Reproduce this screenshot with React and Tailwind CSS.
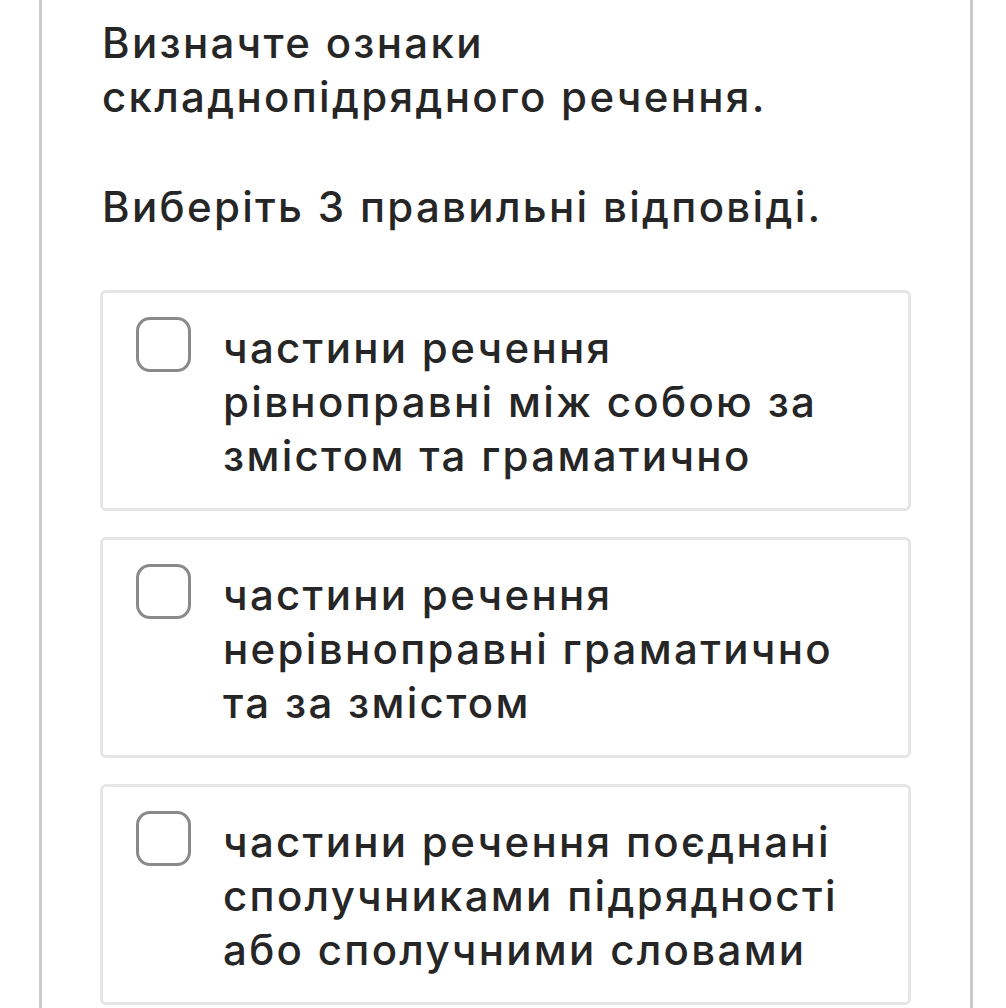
const options = [
  ["частини речення", "рівноправні між собою за", "змістом та граматично"],
  ["частини речення", "нерівноправні граматично", "та за змістом"],
  ["частини речення поєднані", "сполучниками підрядності", "або сполучними словами"],
];

function Option({ lines }) {
  return (
    <label className="flex items-start gap-[32px] rounded-[6px] border-[3px] border-[#e6e6e6] bg-white pl-[33px] pr-6 pt-[24px] pb-[25px]">
      <span className="h-[55px] w-[55px] shrink-0 rounded-[14px] border-[3px] border-[#8a8a8a] bg-white" />
      <span className="pt-[4px] text-[42px] leading-[54px] tracking-[0.055em] text-[#262626]">
        {lines.map((l, i) => (
          <span key={i} className="block whitespace-nowrap">
            {l}
          </span>
        ))}
      </span>
    </label>
  );
}

export default function App() {
  return (
    <div className="h-[1008px] w-full overflow-hidden bg-white font-['Inter',sans-serif] font-medium">
      <div className="ml-[39px] h-full w-[934px] border-x-[3px] border-[#cacaca] pl-[58px] pr-[59px] pt-[16px]">
        <div className="pl-[2px] text-[42px] leading-[54px] tracking-[0.055em] text-[#262626]">
          <p>
            Визначте ознаки
            <br />
            складнопідрядного речення.
          </p>
          <p className="mt-[56px]">Виберіть 3 правильні відповіді.</p>
        </div>
        <div className="mt-[56px] flex flex-col gap-[26px]">
          {options.map((o, i) => (
            <Option key={i} lines={o} />
          ))}
        </div>
      </div>
    </div>
  );
}
